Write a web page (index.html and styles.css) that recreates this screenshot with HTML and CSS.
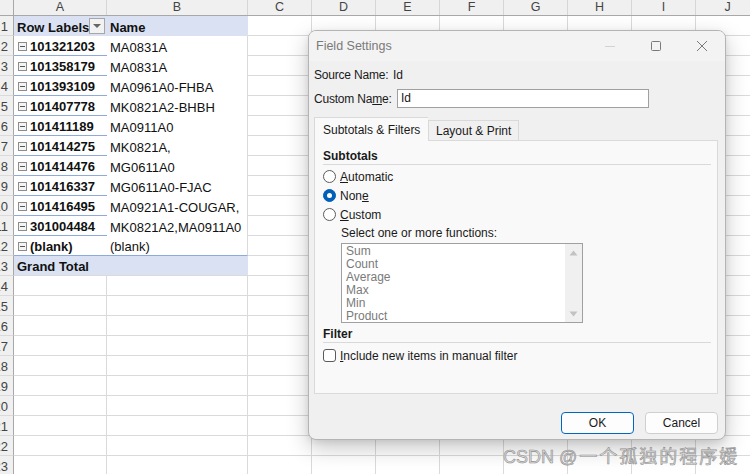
FILE: index.html
```html
<!DOCTYPE html>
<html>
<head>
<meta charset="utf-8">
<link rel="stylesheet" href="styles.css">
</head>
<body>
<div class="sheet">
  <div class="row hdr">
    <div class="rh corner"></div>
    <div class="ch a">A</div><div class="ch b">B</div><div class="ch">C</div><div class="ch">D</div><div class="ch">E</div><div class="ch">F</div><div class="ch">G</div><div class="ch">H</div><div class="ch">I</div><div class="ch">J</div>
  </div>
  <div class="row">
    <div class="rh"><span>1</span></div>
    <div class="c a ph"><span class="bold">Row Labels</span><span class="dd"></span></div>
    <div class="c b ph"><span class="bold">Name</span></div>
    <div class="c"></div><div class="c"></div><div class="c"></div><div class="c"></div><div class="c"></div><div class="c"></div><div class="c"></div><div class="c"></div>
  </div>
  <div class="row">
    <div class="rh"><span>2</span></div>
    <div class="c a pa"><span class="col"></span><span class="bold">101321203</span></div>
    <div class="c b pb">MA0831A</div>
    <div class="c"></div><div class="c"></div><div class="c"></div><div class="c"></div><div class="c"></div><div class="c"></div><div class="c"></div><div class="c"></div>
  </div>
  <div class="row">
    <div class="rh"><span>3</span></div>
    <div class="c a pa"><span class="col"></span><span class="bold">101358179</span></div>
    <div class="c b pb">MA0831A</div>
    <div class="c"></div><div class="c"></div><div class="c"></div><div class="c"></div><div class="c"></div><div class="c"></div><div class="c"></div><div class="c"></div>
  </div>
  <div class="row">
    <div class="rh"><span>4</span></div>
    <div class="c a pa"><span class="col"></span><span class="bold">101393109</span></div>
    <div class="c b pb">MA0961A0-FHBA</div>
    <div class="c"></div><div class="c"></div><div class="c"></div><div class="c"></div><div class="c"></div><div class="c"></div><div class="c"></div><div class="c"></div>
  </div>
  <div class="row">
    <div class="rh"><span>5</span></div>
    <div class="c a pa"><span class="col"></span><span class="bold">101407778</span></div>
    <div class="c b pb">MK0821A2-BHBH</div>
    <div class="c"></div><div class="c"></div><div class="c"></div><div class="c"></div><div class="c"></div><div class="c"></div><div class="c"></div><div class="c"></div>
  </div>
  <div class="row">
    <div class="rh"><span>6</span></div>
    <div class="c a pa"><span class="col"></span><span class="bold">101411189</span></div>
    <div class="c b pb">MA0911A0</div>
    <div class="c"></div><div class="c"></div><div class="c"></div><div class="c"></div><div class="c"></div><div class="c"></div><div class="c"></div><div class="c"></div>
  </div>
  <div class="row">
    <div class="rh"><span>7</span></div>
    <div class="c a pa"><span class="col"></span><span class="bold">101414275</span></div>
    <div class="c b pb">MK0821A,</div>
    <div class="c"></div><div class="c"></div><div class="c"></div><div class="c"></div><div class="c"></div><div class="c"></div><div class="c"></div><div class="c"></div>
  </div>
  <div class="row">
    <div class="rh"><span>8</span></div>
    <div class="c a pa"><span class="col"></span><span class="bold">101414476</span></div>
    <div class="c b pb">MG0611A0</div>
    <div class="c"></div><div class="c"></div><div class="c"></div><div class="c"></div><div class="c"></div><div class="c"></div><div class="c"></div><div class="c"></div>
  </div>
  <div class="row">
    <div class="rh"><span>9</span></div>
    <div class="c a pa"><span class="col"></span><span class="bold">101416337</span></div>
    <div class="c b pb">MG0611A0-FJAC</div>
    <div class="c"></div><div class="c"></div><div class="c"></div><div class="c"></div><div class="c"></div><div class="c"></div><div class="c"></div><div class="c"></div>
  </div>
  <div class="row">
    <div class="rh"><span>10</span></div>
    <div class="c a pa"><span class="col"></span><span class="bold">101416495</span></div>
    <div class="c b pb">MA0921A1-COUGAR,</div>
    <div class="c"></div><div class="c"></div><div class="c"></div><div class="c"></div><div class="c"></div><div class="c"></div><div class="c"></div><div class="c"></div>
  </div>
  <div class="row">
    <div class="rh"><span>11</span></div>
    <div class="c a pa"><span class="col"></span><span class="bold">301004484</span></div>
    <div class="c b pb">MK0821A2,MA0911A0</div>
    <div class="c"></div><div class="c"></div><div class="c"></div><div class="c"></div><div class="c"></div><div class="c"></div><div class="c"></div><div class="c"></div>
  </div>
  <div class="row">
    <div class="rh"><span>12</span></div>
    <div class="c a pa"><span class="col"></span><span class="bold">(blank)</span></div>
    <div class="c b pb last">(blank)</div>
    <div class="c"></div><div class="c"></div><div class="c"></div><div class="c"></div><div class="c"></div><div class="c"></div><div class="c"></div><div class="c"></div>
  </div>
  <div class="row">
    <div class="rh"><span>13</span></div>
    <div class="c a pg"><span class="bold">Grand Total</span></div>
    <div class="c b pg"></div>
    <div class="c"></div><div class="c"></div><div class="c"></div><div class="c"></div><div class="c"></div><div class="c"></div><div class="c"></div><div class="c"></div>
  </div>
  <div class="row"><div class="rh"><span>14</span></div><div class="c a"></div><div class="c b"></div><div class="c"></div><div class="c"></div><div class="c"></div><div class="c"></div><div class="c"></div><div class="c"></div><div class="c"></div><div class="c"></div></div>
  <div class="row"><div class="rh"><span>15</span></div><div class="c a"></div><div class="c b"></div><div class="c"></div><div class="c"></div><div class="c"></div><div class="c"></div><div class="c"></div><div class="c"></div><div class="c"></div><div class="c"></div></div>
  <div class="row"><div class="rh"><span>16</span></div><div class="c a"></div><div class="c b"></div><div class="c"></div><div class="c"></div><div class="c"></div><div class="c"></div><div class="c"></div><div class="c"></div><div class="c"></div><div class="c"></div></div>
  <div class="row"><div class="rh"><span>17</span></div><div class="c a"></div><div class="c b"></div><div class="c"></div><div class="c"></div><div class="c"></div><div class="c"></div><div class="c"></div><div class="c"></div><div class="c"></div><div class="c"></div></div>
  <div class="row"><div class="rh"><span>18</span></div><div class="c a"></div><div class="c b"></div><div class="c"></div><div class="c"></div><div class="c"></div><div class="c"></div><div class="c"></div><div class="c"></div><div class="c"></div><div class="c"></div></div>
  <div class="row"><div class="rh"><span>19</span></div><div class="c a"></div><div class="c b"></div><div class="c"></div><div class="c"></div><div class="c"></div><div class="c"></div><div class="c"></div><div class="c"></div><div class="c"></div><div class="c"></div></div>
  <div class="row"><div class="rh"><span>20</span></div><div class="c a"></div><div class="c b"></div><div class="c"></div><div class="c"></div><div class="c"></div><div class="c"></div><div class="c"></div><div class="c"></div><div class="c"></div><div class="c"></div></div>
  <div class="row"><div class="rh"><span>21</span></div><div class="c a"></div><div class="c b"></div><div class="c"></div><div class="c"></div><div class="c"></div><div class="c"></div><div class="c"></div><div class="c"></div><div class="c"></div><div class="c"></div></div>
  <div class="row"><div class="rh"><span>22</span></div><div class="c a"></div><div class="c b"></div><div class="c"></div><div class="c"></div><div class="c"></div><div class="c"></div><div class="c"></div><div class="c"></div><div class="c"></div><div class="c"></div></div>
  <div class="row"><div class="rh"><span>23</span></div><div class="c a"></div><div class="c b"></div><div class="c"></div><div class="c"></div><div class="c"></div><div class="c"></div><div class="c"></div><div class="c"></div><div class="c"></div><div class="c"></div></div>
</div>

<div class="dialog">
  <div class="titlebar">
    <div class="title">Field Settings</div>
    <div class="wbtn"><svg width="12" height="12" viewBox="0 0 12 12"><path d="M1 6.5h10" stroke="#d2d2d2" stroke-width="1"/></svg></div>
    <div class="wbtn"><svg width="12" height="12" viewBox="0 0 12 12"><rect x="1.5" y="1.5" width="9" height="9" rx="1" fill="none" stroke="#7a7a7a" stroke-width="1"/></svg></div>
    <div class="wbtn"><svg width="12" height="12" viewBox="0 0 12 12"><path d="M1 1L11 11M11 1L1 11" stroke="#7a7a7a" stroke-width="1"/></svg></div>
  </div>
  <div class="dbody">
    <div class="frow"><span class="lbl1">Source Name:</span><span>Id</span></div>
    <div class="frow crow"><span class="lbl2">Custom Na<u>m</u>e:</span><div class="input">Id</div></div>
    <div class="tabs">
      <div class="tab sel">Subtotals &amp; Filters</div>
      <div class="tab">Layout &amp; Print</div>
    </div>
    <div class="panel">
      <div class="sec">Subtotals</div>
      <div class="opt"><span class="radio"></span><span><u>A</u>utomatic</span></div>
      <div class="opt"><span class="radio on"></span><span>Non<u>e</u></span></div>
      <div class="opt"><span class="radio"></span><span><u>C</u>ustom</span></div>
      <div class="sel-lbl">Select one or more functions:</div>
      <div class="list">
        <div class="items">
          <div>Sum</div><div>Count</div><div>Average</div><div>Max</div><div>Min</div><div>Product</div>
        </div>
        <div class="sbar">
          <svg width="9" height="6" viewBox="0 0 9 6"><path d="M0.5 5.5L4.5 0.5L8.5 5.5Z" fill="#c2c2c2"/></svg>
          <svg width="9" height="6" viewBox="0 0 9 6"><path d="M0.5 0.5L4.5 5.5L8.5 0.5Z" fill="#c2c2c2"/></svg>
        </div>
      </div>
      <div class="sec sec2">Filter</div>
      <div class="opt chk-row"><span class="chk"></span><span><u>I</u>nclude new items in manual filter</span></div>
    </div>
    <div class="buttons">
      <div class="btn ok">OK</div>
      <div class="btn">Cancel</div>
    </div>
  </div>
</div>

<div class="watermark">CSDN @<span class="cjk">一个孤独的程序媛</span></div>
</body>
</html>
```
FILE: styles.css
```css
* { box-sizing: border-box; }
html, body {
  margin: 0;
  padding: 0;
}
body {
  width: 750px;
  height: 474px;
  overflow: hidden;
  position: relative;
  background: #ffffff;
  font-family: "Liberation Sans", Arial, sans-serif;
}
.sheet {
  display: flex;
  flex-direction: column;
  width: 750px;
  overflow: hidden;
}
.row {
  display: flex;
  height: 20px;
  flex: none;
}
.row.hdr {
  height: 16px;
  background: #f0f0f0;
  border-bottom: 1px solid #a8a8a8;
}
.rh {
  width: 14px;
  flex: none;
  display: flex;
  justify-content: flex-end;
  align-items: center;
  overflow: hidden;
  background: #f0f0f0;
  border-right: 1px solid #a8a8a8;
  border-bottom: 1px solid #dadada;
  padding-right: 5px;
  padding-top: 2px;
  font-size: 13px;
  color: #444;
  font-family: "Liberation Sans", Arial, sans-serif;
}
.rh span { flex: none; }
.rh.corner { border-bottom: none; }
.ch {
  width: 64px;
  flex: none;
  text-align: center;
  font-size: 12.5px;
  line-height: 15px;
  color: #444;
  border-right: 1px solid #d6d6d6;
}
.c {
  width: 64px;
  flex: none;
  height: 20px;
  border-right: 1px solid #dadada;
  border-bottom: 1px solid #dadada;
  font-size: 13px;
  color: #111;
  display: flex;
  align-items: center;
  padding-left: 3px;
  padding-top: 2px;
  white-space: nowrap;
}
.a { width: 93px; }
.b { width: 141px; }
.bold { font-weight: bold; }
.ph {
  background: #d9e1f2;
  border-bottom: none;
  border-right: none;
}
.ph.b { border-right: 1px solid #d9e1f2; }
.ph .dd {
  margin-left: auto;
  margin-right: 2px;
  margin-top: -2px;
  width: 16px;
  height: 16px;
  border: 1px solid #a6a6a6;
  background: #f2f2f2;
  position: relative;
}
.ph .dd::after {
  content: "";
  position: absolute;
  left: 3px;
  top: 5px;
  border-left: 4px solid transparent;
  border-right: 4px solid transparent;
  border-top: 4px solid #666;
}
.pa {
  border-right: none;
  border-bottom: 1px solid #8ea9db;
  padding-left: 4px;
}
.pb {
  border-bottom: none;
}
.pb.last { border-bottom: 1px solid #8ea9db; }
.col {
  width: 9px;
  height: 9px;
  border: 1px solid #8c8c8c;
  background: #f4f4f4;
  margin-right: 3px;
  margin-top: -1px;
  position: relative;
  flex: none;
}
.col::after {
  content: "";
  position: absolute;
  left: 1px;
  right: 1px;
  top: 3px;
  height: 1px;
  background: #555;
}
.pg {
  background: #d9e1f2;
  border-right: none;
}
.pg.b { border-right: 1px solid #d9e1f2; }

/* dialog */
.dialog {
  position: absolute;
  left: 308px;
  top: 30px;
  width: 418px;
  height: 410px;
  border: 1px solid #b4b4b4;
  border-radius: 8px;
  background: #f0f0f0;
  box-shadow: 0 8px 22px rgba(0, 0, 0, 0.22), 0 2px 6px rgba(0, 0, 0, 0.08);
  overflow: hidden;
  font-family: "Liberation Sans", Arial, sans-serif;
  font-size: 12px;
  color: #1a1a1a;
}
.titlebar {
  height: 30px;
  background: #f3f3f3;
  display: flex;
  align-items: center;
}
.title {
  flex: 1;
  padding-left: 7px;
  color: #7a7a7a;
  font-size: 12.5px;
  margin-top: -1px;
}
.wbtn {
  width: 46px;
  height: 30px;
  display: flex;
  align-items: center;
  justify-content: center;
}
.dbody {
  padding-left: 5px;
  display: flex;
  flex-direction: column;
}
.frow {
  display: flex;
  align-items: center;
  height: 20px;
  margin-top: 4px;
  white-space: nowrap;
}
.lbl1 { width: 79px; flex: none; letter-spacing: -0.2px; }
.lbl2 { width: 83px; flex: none; letter-spacing: -0.2px; }
.crow { height: 19px; margin-top: 4px; }
.input {
  width: 252px;
  height: 19px;
  border: 1px solid #a0a0a0;
  background: #fff;
  padding-left: 3px;
  line-height: 17px;
}
.tabs {
  display: flex;
  align-items: flex-end;
  margin-top: 9px;
  height: 23px;
  position: relative;
  z-index: 1;
}
.tab {
  height: 20px;
  padding: 0 7px;
  border: 1px solid #d9d9d9;
  border-bottom: none;
  background: #f0f0f0;
  display: flex;
  align-items: center;
  padding-top: 1px;
}
.tab.sel {
  width: 114px;
  background: #f9f9f9;
  padding: 0 0 0 8px;
  border-right: none;
  margin-bottom: -1px;
  height: 24px;
}
.panel {
  width: 404px;
  height: 254px;
  border: 1px solid #dadada;
  background: #f9f9f9;
  padding: 0 6px 0 8px;
  display: flex;
  flex-direction: column;
}
.sec {
  font-weight: bold;
  height: 17px;
  line-height: 16px;
  margin-top: 7px;
  border-bottom: 1px solid #d9d9d9;
}
.sec2 { margin-top: 3px; }
.opt {
  display: flex;
  align-items: center;
  height: 19px;
}
.sec + .opt { margin-top: 2px; }
.sec + .chk-row { margin-top: 3px; }
.radio {
  width: 13px;
  height: 13px;
  border-radius: 50%;
  border: 1px solid #5a5a5a;
  background: #fff;
  margin-right: 4px;
  flex: none;
  position: relative;
}
.radio.on {
  background: #005fb8;
  border-color: #005fb8;
}
.radio.on::after {
  content: "";
  position: absolute;
  left: 3px;
  top: 3px;
  width: 5px;
  height: 5px;
  border-radius: 50%;
  background: #fff;
}
.chk {
  width: 13px;
  height: 13px;
  border-radius: 3px;
  border: 1px solid #5a5a5a;
  background: #fff;
  margin-right: 4px;
  flex: none;
}
.sel-lbl {
  height: 16px;
  line-height: 16px;
  margin-top: 1px;
  padding-left: 18px;
}
.list {
  margin-top: 2px;
  margin-left: 18px;
  width: 242px;
  height: 80px;
  border: 1px solid #a0a0a0;
  background: #fff;
  display: flex;
}
.items {
  flex: 1;
  padding: 1px 0 0 4px;
  color: #7a7a7a;
  line-height: 13px;
}
.sbar {
  width: 17px;
  background: #f0f0f0;
  display: flex;
  flex-direction: column;
  justify-content: space-between;
  align-items: center;
  padding: 6px 0 5px;
}
.buttons {
  display: flex;
  justify-content: flex-end;
  gap: 11px;
  margin-top: 18px;
  padding-right: 7px;
}
.btn {
  width: 73px;
  height: 22px;
  border: 1px solid #cfcfcf;
  border-radius: 4px;
  background: #fdfdfd;
  display: flex;
  align-items: center;
  justify-content: center;
  color: #1a1a1a;
}
.btn.ok {
  border-color: #0067c0;
}
.watermark {
  position: absolute;
  left: 503px;
  top: 444px;
  font-family: "Liberation Sans", "Noto Sans CJK SC", sans-serif;
  font-size: 18px;
  line-height: 22px;
  color: #dcdcdc;
  -webkit-text-stroke: 0.6px #8f8f8f;
  white-space: nowrap;
}
.watermark .cjk {
  font-family: "Noto Sans CJK SC", sans-serif;
  letter-spacing: 2px;
  margin-left: 2px;
}
```
